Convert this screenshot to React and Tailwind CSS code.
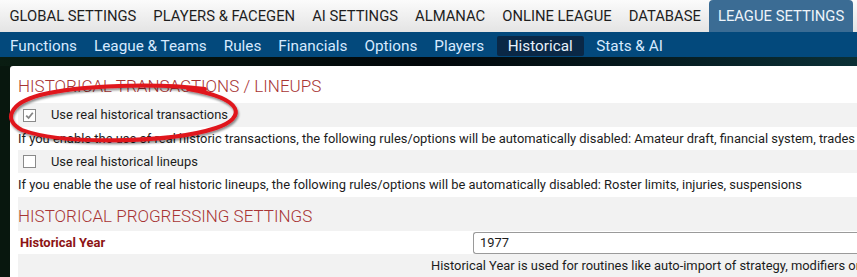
import React from "react";

const topItems = ["GLOBAL SETTINGS", "PLAYERS & FACEGEN", "AI SETTINGS", "ALMANAC", "ONLINE LEAGUE", "DATABASE"];
const subItems = ["Functions", "League & Teams", "Rules", "Financials", "Options", "Players"];

function Checkbox({ checked }) {
  return (
    <div className="w-[13px] h-[13px] border border-[#8a8a8a] bg-white flex items-center justify-center">
      {checked && (
        <svg width="9" height="9" viewBox="0 0 9 9">
          <path d="M1.2 4.6 L3.6 7 L7.8 1.8" fill="none" stroke="#858585" strokeWidth="1.8" />
        </svg>
      )}
    </div>
  );
}

export default function App() {
  return (
    <div className="relative w-[857px] h-[277px] overflow-hidden bg-[#07140d] font-['Roboto',sans-serif]">
      {/* top nav */}
      <div className="h-[32px] flex items-stretch pl-[1px] bg-gradient-to-b from-[#fbfbfb] to-[#e4e4e4] whitespace-nowrap">
        {topItems.map((t) => (
          <div key={t} className="shrink-0 px-[8.5px] flex items-center text-[14.8px] text-[#1e1e1e]">{t}</div>
        ))}
        <div className="shrink-0 px-[8.5px] flex items-center text-[14.8px] text-[#eef4fa] bg-[#3b6c94] rounded-t-[4px]">LEAGUE SETTINGS</div>
      </div>
      {/* sub nav */}
      <div className="h-[25px] flex items-start pt-[4px] pl-[1.5px] bg-[#03497c] whitespace-nowrap">
        {subItems.map((t) => (
          <div key={t} className="shrink-0 h-[20px] px-[8.5px] flex items-center text-[15.3px] text-[#d6eaff]">{t}</div>
        ))}
        <div className="shrink-0 h-[20px] mx-[4px] px-[11px] flex items-center text-[15.3px] text-[#e8f2fc] bg-[#0a2846] rounded-[2px]">Historical</div>
        <div className="shrink-0 h-[20px] px-[8.5px] flex items-center text-[15.3px] text-[#d6eaff]">Stats &amp; AI</div>
      </div>
      {/* dark strip */}
      <div className="h-[9px] bg-gradient-to-r from-[#0a1d12] via-[#02070a] to-[#0b3036]" />
      {/* content */}
      <div className="flex">
        <div className="w-[10px] shrink-0 bg-[#08170e]" />
        <div className="flex-1 bg-white rounded-tl-[3px] pl-[8px] text-[12.92px] text-[#1c1c1c]">
          <div className="h-[37px] pt-[10px] leading-[20px] text-[17px] font-light text-[#a83434]">
            HISTORICAL TRANSACTIONS / LINEUPS
          </div>
          <div className="h-[24px] bg-[#f2f2f2] flex items-center pl-[5px]">
            <Checkbox checked />
            <span className="ml-[15px]">Use real historical transactions</span>
          </div>
          <div className="h-[23px] flex items-center whitespace-nowrap">
            If you enable the use of real historic transactions, the following rules/options will be automatically disabled: Amateur draft, financial system, trades
          </div>
          <div className="h-[23px] bg-[#f2f2f2] flex items-center pl-[5px]">
            <Checkbox />
            <span className="ml-[15px]">Use real historical lineups</span>
          </div>
          <div className="h-[24px] flex items-center whitespace-nowrap">
            If you enable the use of real historic lineups, the following rules/options will be automatically disabled: Roster limits, injuries, suspensions
          </div>
          <div className="h-[34px] bg-[#f2f2f2] pt-[9px] leading-[20px] text-[17px] font-light text-[#a83434]">
            HISTORICAL PROGRESSING SETTINGS
          </div>
          <div className="h-[23px] grid grid-cols-[413px_1fr] items-center">
            <span className="pl-[2px] font-bold text-[#8c1414]">Historical Year</span>
            <div className="ml-[42px] h-[22px] border border-[#9a9a9a] border-r-0 rounded-l-[3px] flex items-center pl-[6px] bg-white">1977</div>
          </div>
          <div className="h-[24px] bg-[#f2f2f2] grid grid-cols-[413px_1fr] items-center">
            <span />
            <span className="whitespace-nowrap">Historical Year is used for routines like auto-import of strategy, modifiers or</span>
          </div>
        </div>
      </div>
      {/* red ellipse annotation */}
      <svg className="absolute left-0 top-0 pointer-events-none" width="260" height="160" viewBox="0 0 260 160">
        <defs>
          <filter id="sh" x="-10%" y="-20%" width="120%" height="140%">
            <feDropShadow dx="1" dy="2" stdDeviation="1.2" floodColor="#000" floodOpacity="0.45" />
          </filter>
        </defs>
        <path
          d="M205 89 C155 83, 80 85, 40 95 C10 103, 2 120, 22 130 C62 145, 170 143, 216 128 C246 118, 246 99, 188 89"
          fill="none"
          stroke="#e0161e"
          strokeWidth="4"
          strokeLinecap="round"
          filter="url(#sh)"
        />
      </svg>
    </div>
  );
}
